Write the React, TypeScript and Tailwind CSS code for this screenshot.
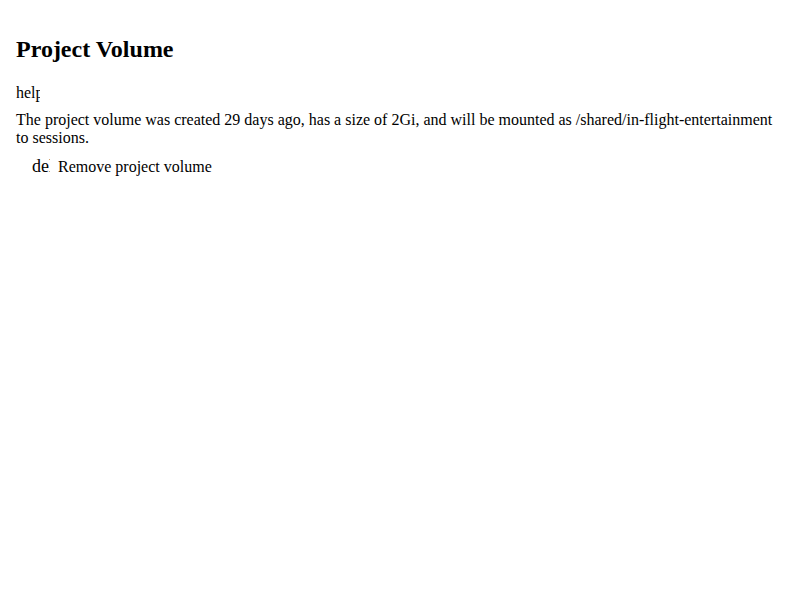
export default function App() {
  return (
    <div className="p-4 pt-0 font-['Liberation_Serif',serif] text-black leading-[normal]">
      <h2 className="text-2xl leading-[normal] font-bold mt-[36px] mb-[21px]">Project Volume</h2>
      <span className="block w-6 h-[18px] overflow-hidden whitespace-nowrap">help</span>
      <p className="mt-[9px] leading-[18px]">
        The project volume was created 29 days ago, has a size of 2Gi, and will be mounted as
        /shared/in-flight-entertainment to sessions.
      </p>
      <button className="mt-[9px] flex items-center gap-[8px] pl-4">
        <span className="block w-[18px] overflow-hidden whitespace-nowrap text-lg leading-[normal]">delete</span>
        <span>Remove project volume</span>
      </button>
    </div>
  );
}
